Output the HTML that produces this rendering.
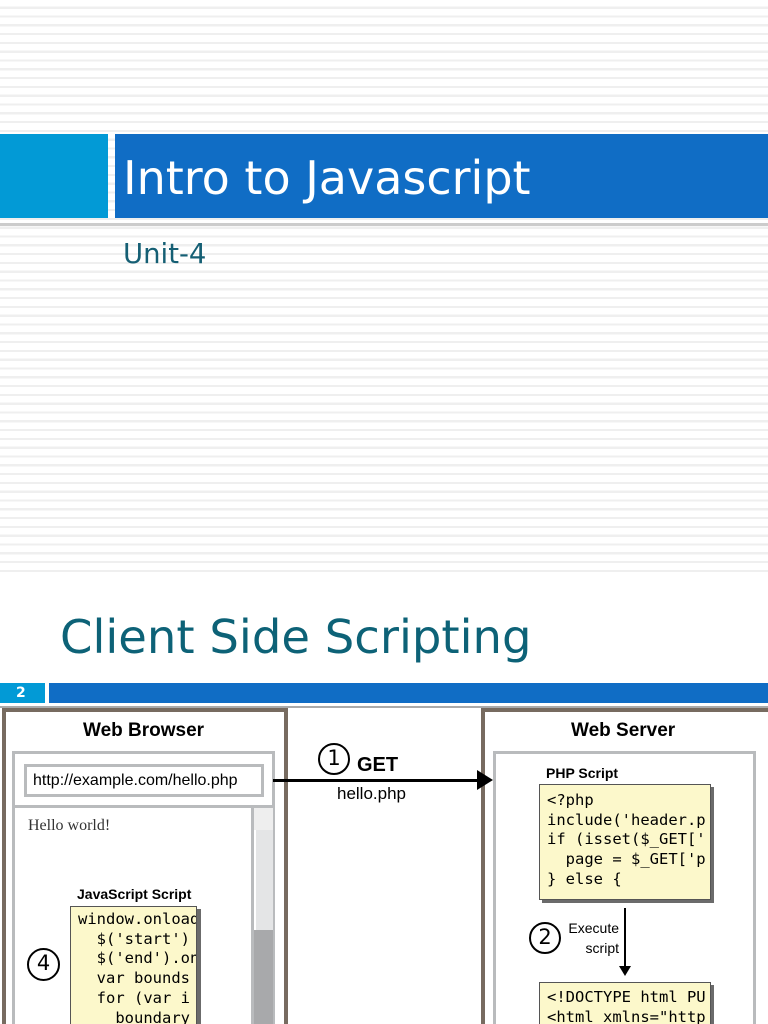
<!DOCTYPE html>
<html><head><style>
*{margin:0;padding:0;box-sizing:border-box}
html,body{width:768px;height:1024px;overflow:hidden}
body{position:relative;background:#fff;font-family:"DejaVu Sans","Liberation Sans",sans-serif}
.stripes{position:absolute;left:0;top:0;width:768px;height:576px;background:repeating-linear-gradient(to bottom,#fff 0,#fff 6.6px,#efefef 6.6px,#efefef 8.8px)}
.abs{position:absolute}
.mono{font-family:"DejaVu Sans Mono","Liberation Mono",monospace}
.circ{position:absolute;border:2px solid #000;border-radius:50%;text-align:center;font-size:21px;line-height:27px;background:#fff}
</style></head><body>
<div class="stripes"></div>
<div class="abs" style="left:0;top:134px;width:108px;height:84px;background:#029ad6"></div>
<div class="abs" style="left:115px;top:134px;width:653px;height:84px;background:#106dc5"></div>
<div class="abs" style="left:0;top:223px;width:768px;height:3px;background:#aaa;opacity:.6"></div>
<div class="abs" style="left:123px;top:151px;color:#fff;font-size:46px">Intro to Javascript</div>
<div class="abs" style="left:123px;top:238px;color:#155f74;font-size:27.5px">Unit-4</div>

<div class="abs" style="left:60px;top:610px;color:#0d6277;font-size:46.5px">Client Side Scripting</div>
<div class="abs" style="left:0;top:683px;width:45px;height:20px;background:#029ad6;color:#fff;font-size:14px;font-weight:bold;padding-left:16px;line-height:20px">2</div>
<div class="abs" style="left:49px;top:683px;width:719px;height:20px;background:#106dc5"></div>

<div class="abs" style="left:0;top:706px;width:768px;height:318px;background:#fff;overflow:hidden">
<div class="abs" style="left:2px;top:2px;width:286px;height:330px;border:4px solid #776b60;border-bottom:none;background:#fff"></div>
<div class="abs" style="left:481px;top:2px;width:287px;height:330px;border:4px solid #776b60;border-right:none;border-bottom:none;background:#fff"></div>
<div class="abs" style="left:0;top:0;width:768px;height:2px;background:#aaa"></div>
<div class="abs" style="left:83px;top:14px;font-size:19px;font-weight:bold;font-family:'Liberation Sans',sans-serif">Web Browser</div>
<div class="abs" style="left:571px;top:14px;font-size:19px;font-weight:bold;font-family:'Liberation Sans',sans-serif">Web Server</div>
<div class="abs" style="left:12px;top:45px;width:263px;height:290px;border:3px solid #b9bbbd"></div>
<div class="abs" style="left:24px;top:58px;width:240px;height:33px;border:3px solid #b9bbbd;font-family:'Liberation Sans',sans-serif;font-size:16px;line-height:27px;padding-left:6px">http://example.com/hello.php</div>
<div class="abs" style="left:14px;top:99px;width:259px;height:3px;background:#b9bbbd"></div>
<div class="abs" style="left:251px;top:100px;width:3px;height:230px;background:#b9bbbd"></div>
<div class="abs" style="left:254px;top:102px;width:19px;height:22px;background:#eee"></div>
<div class="abs" style="left:256px;top:124px;width:17px;height:100px;background:#e4e5e6"></div>
<div class="abs" style="left:254px;top:224px;width:19px;height:100px;background:#a8a9ab"></div>
<div class="abs" style="left:28px;top:111px;font-family:'Liberation Serif',serif;font-size:16px;color:#333">Hello world!</div>
<div class="abs" style="left:77px;top:180px;font-size:14px;font-weight:bold;font-family:'Liberation Sans',sans-serif">JavaScript Script</div>
<div class="abs mono" style="left:70px;top:200px;width:127px;height:140px;background:#fcf8cb;border:1px solid #555;box-shadow:4px 3px 0 #6b6b6b;font-size:15.5px;line-height:19.7px;padding:3px 0 0 7px;overflow:hidden;white-space:pre">window.onload
  $('start')
  $('end').on
  var bounds
  for (var i
    boundary</div>
<div class="circ" style="left:27px;top:242px;width:33px;height:33px">4</div>
<div class="abs" style="left:273px;top:73px;width:206px;height:3px;background:#000"></div>
<div class="abs" style="left:477px;top:64px;width:0;height:0;border-top:10px solid transparent;border-bottom:10px solid transparent;border-left:16px solid #000"></div>
<div class="circ" style="left:318px;top:37px;width:32px;height:32px">1</div>
<div class="abs" style="left:357px;top:48px;font-size:20px;font-weight:bold;font-family:'Liberation Sans',sans-serif">GET</div>
<div class="abs" style="left:337px;top:78px;font-size:17px;font-family:'Liberation Sans',sans-serif">hello.php</div>
<div class="abs" style="left:493px;top:45px;width:263px;height:290px;border:3px solid #b9bbbd"></div>
<div class="abs" style="left:546px;top:59px;font-size:14px;font-weight:bold;font-family:'Liberation Sans',sans-serif">PHP Script</div>
<div class="abs mono" style="left:539px;top:78px;width:172px;height:116px;background:#fcf8cb;border:1px solid #555;box-shadow:3px 3px 0 #6b6b6b;font-size:15.5px;line-height:19.7px;padding:6px 0 0 7px;overflow:hidden;white-space:pre">&lt;?php
include('header.p
if (isset($_GET['
  page = $_GET['p
} else {</div>
<div class="abs" style="left:624px;top:202px;width:2px;height:60px;background:#000"></div>
<div class="abs" style="left:619px;top:260px;border-left:6px solid transparent;border-right:6px solid transparent;border-top:10px solid #000"></div>
<div class="circ" style="left:529px;top:216px;width:32px;height:32px">2</div>
<div class="abs" style="left:567px;top:212px;font-size:14px;font-family:'Liberation Sans',sans-serif;text-align:right;width:52px;line-height:20px">Execute<br>script</div>
<div class="abs mono" style="left:539px;top:276px;width:172px;height:60px;background:#fcf8cb;border:1px solid #555;box-shadow:3px 3px 0 #6b6b6b;font-size:15.5px;line-height:19.7px;padding:5px 0 0 7px;overflow:hidden;white-space:pre">&lt;!DOCTYPE html PU
&lt;html xmlns="http</div>
</div>
</body></html>
